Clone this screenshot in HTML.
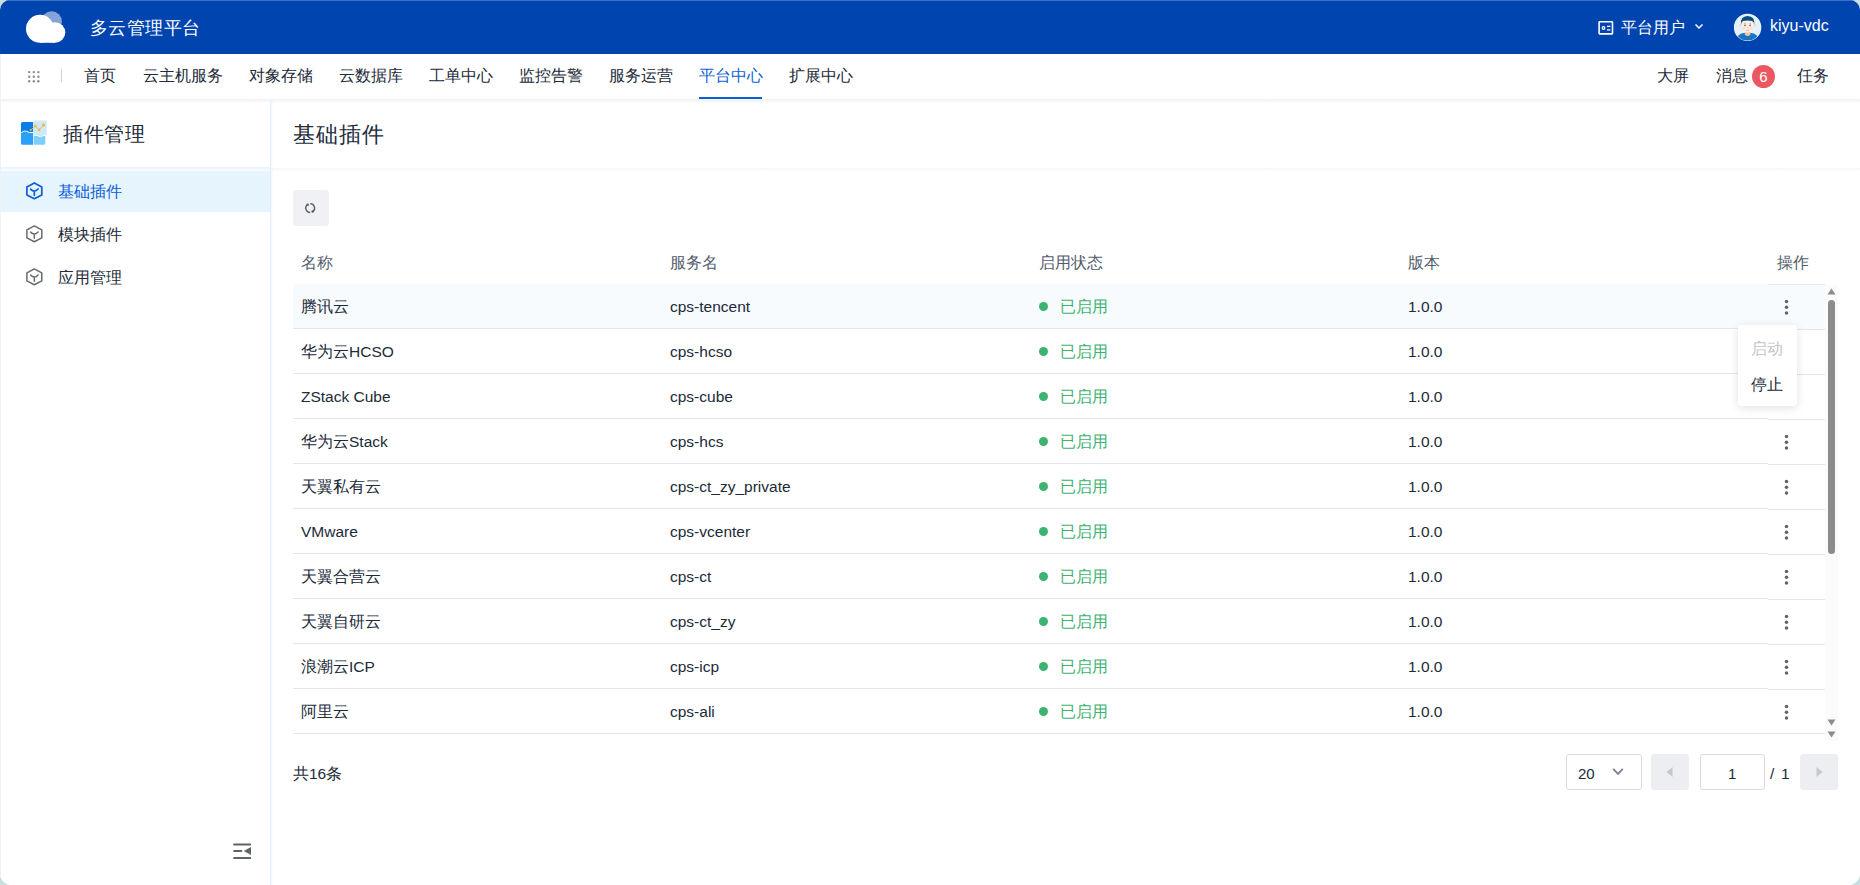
<!DOCTYPE html>
<html><head><meta charset="utf-8">
<style>
*{margin:0;padding:0;box-sizing:border-box}
html,body{width:1860px;height:885px;overflow:hidden;background:#c9dfdf;font-family:"Liberation Sans",sans-serif;}
.abs{position:absolute}
#app{position:absolute;left:0;top:0;width:1860px;height:885px;background:#fff;border-radius:10px 10px 12px 12px;overflow:hidden}
#ledge{position:absolute;left:0;top:54px;width:1px;height:831px;background:#edf2f6;z-index:5}
#hdr{position:absolute;left:0;top:0;width:1860px;height:54px;background:#0044b0;border-top:1px solid #3d6fc2}
#nav{position:absolute;left:0;top:54px;width:1860px;height:45px;background:#fff;z-index:2}
#navsh{position:absolute;left:0;top:99px;width:1860px;height:4px;background:linear-gradient(#eef0f3,rgba(255,255,255,0));z-index:3}
.t{position:absolute;white-space:nowrap;line-height:1}
.l{font-size:15.5px}
#side{position:absolute;left:0;top:99px;width:270px;height:786px;background:#fff}
#sideb{position:absolute;left:270px;top:99px;width:1px;height:786px;background:#e2eefb;z-index:2}
#sidesh{position:absolute;left:271px;top:99px;width:3px;height:786px;background:linear-gradient(90deg,#f3f7fc,rgba(255,255,255,0));z-index:2}
#main{position:absolute;left:271px;top:99px;width:1589px;height:786px;background:#fff}
.nv{font-size:16px;color:#212a38;top:14px}
.row{position:absolute;left:22px;width:1532px;height:45px;border-bottom:1px solid #e3e7ed}
.row .c{top:15px;font-size:16px;color:#212a38}
.h{font-size:16px;color:#525d6c}
.dot{top:18px;width:9px;height:9px;border-radius:50%;background:#3cb371}
</style></head><body>
<div id="app"><div id="ledge"></div>
 <div id="hdr">
  <svg class="abs" style="left:20px;top:3px" width="50" height="44" viewBox="20 4 50 44">
   <circle cx="51.6" cy="21.6" r="10.3" fill="#85a3d6"/>
   <circle cx="40" cy="28.8" r="14" fill="#fff"/>
   <circle cx="55" cy="32.5" r="10.3" fill="#fff"/>
   <rect x="40" y="33" width="15" height="9.8" fill="#fff"/>
  </svg>
  <div class="t" style="left:90px;top:18px;font-size:18px;letter-spacing:.45px;color:#fff">多云管理平台</div>
  <svg class="abs" style="left:1597px;top:18px" width="18" height="17" viewBox="0 0 18 17"><rect x="2.1" y="2.8" width="13.4" height="12.1" rx="0.6" fill="none" stroke="#fff" stroke-width="1.6"/><circle cx="6.5" cy="9" r="1.35" fill="none" stroke="#fff" stroke-width="1.2"/><path d="M10 7.4h3.3M10 10.9h3.3" stroke="#fff" stroke-width="1.3"/></svg>
  <div class="t" style="left:1621px;top:19px;font-size:16px;color:#fff">平台用户</div>
  <svg class="abs" style="left:1694px;top:22px" width="10" height="7" viewBox="0 0 10 7"><path d="M1.5 1.5L5 5l3.5-3.5" fill="none" stroke="#fff" stroke-width="1.5"/></svg>
  <svg class="abs" style="left:1733px;top:12.2px" width="29" height="29" viewBox="0 0 29 29">
   <defs><clipPath id="cc"><circle cx="14.6" cy="14.4" r="13.1"/></clipPath></defs>
   <circle cx="14.6" cy="14.4" r="13.7" fill="#f4f9fe"/>
   <circle cx="14.6" cy="14.4" r="13.1" fill="#e2f1fc"/>
   <g clip-path="url(#cc)">
   <path d="M2.5 30 Q3.5 21 10.5 20 L18.7 20 Q25.7 21 26.7 30Z" fill="#1b74c6"/>
   <path d="M11.8 18.5 h5.6 v3.2 q-2.8 2.6 -5.6 0z" fill="#efc4a2"/>
   <circle cx="7.7" cy="12.6" r="1.3" fill="#f6d9c6"/><circle cx="21.5" cy="12.6" r="1.3" fill="#f6d9c6"/>
   <ellipse cx="14.6" cy="13.6" rx="6.3" ry="6.2" fill="#fdeee6"/>
   <path d="M7.9 12 Q7 3.3 14.6 3.1 Q22.2 3.3 21.3 12 Q20.8 8.6 19.2 8 Q14.6 7.2 10 8 Q8.4 8.6 7.9 12Z" fill="#0d4a7e"/>
   <circle cx="10.8" cy="15.3" r="1.4" fill="#f7d6d0" opacity=".8"/><circle cx="18.4" cy="15.3" r="1.4" fill="#f7d6d0" opacity=".8"/>
   <path d="M11 10.3 h2 M16.2 10.3 h2" stroke="#c9b9aa" stroke-width="1"/>
   <circle cx="12" cy="12.4" r="0.8" fill="#6b5540"/><circle cx="17.1" cy="12.4" r="0.8" fill="#6b5540"/>
   <circle cx="14.6" cy="14.6" r="0.5" fill="#e8b4b0"/>
   <path d="M13.4 17.3 h2.4" stroke="#e39a9a" stroke-width="1"/>
   </g>
  </svg>
  <div class="t" style="left:1770px;top:17px;font-size:16px;color:#fff">kiyu-vdc</div>
 </div>
 <div id="nav">
  <svg class="abs" style="left:27px;top:16px" width="14" height="14" viewBox="0 0 14 14" fill="#8a8e95"><circle cx="2.2" cy="2.1" r="1.2"/><circle cx="6.8" cy="2.1" r="1.2"/><circle cx="11.4" cy="2.1" r="1.2"/><circle cx="2.2" cy="6.7" r="1.2"/><circle cx="6.8" cy="6.7" r="1.2"/><circle cx="11.4" cy="6.7" r="1.2"/><circle cx="2.2" cy="11.3" r="1.2"/><circle cx="6.8" cy="11.3" r="1.2"/><circle cx="11.4" cy="11.3" r="1.2"/></svg>
  <div class="abs" style="left:61px;top:15px;width:1px;height:13px;background:#c9d4e1"></div>
  <div class="t nv" style="left:84px">首页</div>
  <div class="t nv" style="left:143px">云主机服务</div>
  <div class="t nv" style="left:249px">对象存储</div>
  <div class="t nv" style="left:339px">云数据库</div>
  <div class="t nv" style="left:429px">工单中心</div>
  <div class="t nv" style="left:519px">监控告警</div>
  <div class="t nv" style="left:609px">服务运营</div>
  <div class="t nv" style="left:699px;color:#0d5fd6">平台中心</div>
  <div class="t nv" style="left:789px">扩展中心</div>
  <div class="abs" style="left:699px;top:43px;width:63px;height:2px;background:#0d5fd6"></div>
  <div class="t nv" style="left:1657px">大屏</div>
  <div class="t nv" style="left:1716px">消息</div>
  <div class="abs" style="left:1752px;top:11px;width:23px;height:23px;border-radius:50%;background:#eb5862;color:#fff;font-size:15px;line-height:24px;text-align:center">6</div>
  <div class="t nv" style="left:1797px">任务</div>
 </div>
 <div id="navsh"></div>
 <div id="side">
  <svg class="abs" style="left:21px;top:21px" width="27" height="26" viewBox="0 0 27 26">
   <path d="M0 3.4 Q0 1.9 1.5 1.9 H12.2 V12.8 H0Z" fill="#0a7fe8"/>
   <path d="M0 12.6 H12.2 V24.7 H1.5 Q0 24.7 0 23.2Z" fill="#2aa0f6"/>
   <path d="M12.9 0.5 H25.7 V14.9 H12.9Z" fill="#cdeafd"/>
   <path d="M12.9 15.6 H24.3 V23.2 Q24.3 24.7 22.8 24.7 H12.9Z" fill="#7dcefd"/>
   <path d="M0.2 12.9 Q3 10 5.4 11.3 Q8 12.9 12.2 12.7" fill="none" stroke="#fff" stroke-width="1"/>
   <path d="M12.9 15.3 Q16.5 15 19.5 16.9 Q22 15.2 24.8 15.3" fill="none" stroke="#fff" stroke-width="1"/>
   <path d="M9.6 10.1 L14.4 6.1 L18.1 9.8 L22.6 5" fill="none" stroke="#f8b531" stroke-width="0.9"/>
   <circle cx="14.4" cy="6.1" r="1.35" fill="#f8b531"/><circle cx="18.1" cy="9.8" r="1.35" fill="#f8b531"/><circle cx="22.6" cy="5" r="1.6" fill="#f8b531"/><circle cx="9.6" cy="10.1" r="1" fill="#f8b531"/>
  </svg>
  <div class="t" style="left:63px;top:24.5px;font-size:20px;letter-spacing:.55px;color:#212a38">插件管理</div>
  <div class="abs" style="left:0;top:68px;width:270px;height:4px;background:linear-gradient(#eaf2fb,#fbfdff)"></div>
  <div class="abs" style="left:0;top:72px;width:270px;height:41px;background:#e5f4fd"></div>
  <svg class="abs" style="left:25px;top:82px" width="19" height="20" viewBox="0 0 19 20"><path d="M9.33 1.9 L16.8 5.95 V13.95 L9.33 17.75 L1.9 13.95 V5.95Z" fill="none" stroke="#0c5dd8" stroke-width="1.7" stroke-linejoin="round"/><path d="M5.6 8.1 Q7.4 10.1 9.33 10.1 Q11.2 10.1 13.05 8.0 M9.33 10 V14.3" fill="none" stroke="#0c5dd8" stroke-width="1.7" stroke-linecap="round" stroke-linejoin="round"/></svg>
  <div class="t" style="left:58px;top:85px;font-size:16px;color:#0c5dd8">基础插件</div>
  <svg class="abs" style="left:25px;top:125px" width="19" height="20" viewBox="0 0 19 20"><path d="M9.33 1.9 L16.8 5.95 V13.95 L9.33 17.75 L1.9 13.95 V5.95Z" fill="none" stroke="#666a71" stroke-width="1.5" stroke-linejoin="round"/><path d="M5.6 8.1 Q7.4 10.1 9.33 10.1 Q11.2 10.1 13.05 8.0 M9.33 10 V14.3" fill="none" stroke="#666a71" stroke-width="1.5" stroke-linecap="round" stroke-linejoin="round"/></svg>
  <div class="t" style="left:58px;top:128px;font-size:16px;color:#212a38">模块插件</div>
  <svg class="abs" style="left:25px;top:168px" width="19" height="20" viewBox="0 0 19 20"><path d="M9.33 1.9 L16.8 5.95 V13.95 L9.33 17.75 L1.9 13.95 V5.95Z" fill="none" stroke="#666a71" stroke-width="1.5" stroke-linejoin="round"/><path d="M5.6 8.1 Q7.4 10.1 9.33 10.1 Q11.2 10.1 13.05 8.0 M9.33 10 V14.3" fill="none" stroke="#666a71" stroke-width="1.5" stroke-linecap="round" stroke-linejoin="round"/></svg>
  <div class="t" style="left:58px;top:171px;font-size:16px;color:#212a38">应用管理</div>
  <svg class="abs" style="left:232px;top:743px" width="20" height="18" viewBox="0 0 20 18"><path d="M2.1 2.6h16.1M2.1 9h7.2M2.1 16h16.1" stroke="#5f6267" stroke-width="2" stroke-linecap="round"/><path d="M19 5 L11.8 9 L19 13Z" fill="#5f6267"/></svg>
 </div>
 <div id="sideb"></div><div id="sidesh"></div>
 <div id="main">
  <div class="t" style="left:22px;top:25px;font-size:22px;letter-spacing:.9px;color:#212a38">基础插件</div>
  <div class="abs" style="left:0;top:69px;width:1589px;height:3px;background:linear-gradient(#f4f6f9,#fdfdfe)"></div>
  <div class="abs" style="left:22px;top:91px;width:36px;height:36px;background:#eff1f5;border-radius:3px"></div>
  <svg class="abs" style="left:31px;top:101px" width="16" height="16" viewBox="0 0 16 16"><path d="M8.2 3.7 A4.4 4.4 0 0 1 10.85 11.62 M8.2 12.5 A4.4 4.4 0 0 1 5.55 4.58" fill="none" stroke="#5b5f66" stroke-width="1.35"/><circle cx="10.7" cy="11.5" r="1.25" fill="#5b5f66"/><circle cx="5.7" cy="4.7" r="1.25" fill="#5b5f66"/></svg>
  <div class="t h" style="left:30px;top:156px">名称</div>
  <div class="t h" style="left:399px;top:156px">服务名</div>
  <div class="t h" style="left:768px;top:156px">启用状态</div>
  <div class="t h" style="left:1137px;top:156px">版本</div>
  <div class="t h" style="left:1506px;top:156px">操作</div>
  <div class="row" style="top:185px;background:#f7fbfe">
   <div class="t c" style="left:8px">腾讯云</div>
   <div class="t c" style="left:377px"><span class="l">cps-tencent</span></div>
   <div class="abs dot" style="left:746px"></div>
   <div class="t c" style="left:767px;color:#3cb371">已启用</div>
   <div class="t c" style="left:1115px"><span class="l">1.0.0</span></div>
  </div>
  <div class="row" style="top:230px;background:#fff">
   <div class="t c" style="left:8px">华为云<span class="l">HCSO</span></div>
   <div class="t c" style="left:377px"><span class="l">cps-hcso</span></div>
   <div class="abs dot" style="left:746px"></div>
   <div class="t c" style="left:767px;color:#3cb371">已启用</div>
   <div class="t c" style="left:1115px"><span class="l">1.0.0</span></div>
  </div>
  <div class="row" style="top:275px;background:#fff">
   <div class="t c" style="left:8px"><span class="l">ZStack Cube</span></div>
   <div class="t c" style="left:377px"><span class="l">cps-cube</span></div>
   <div class="abs dot" style="left:746px"></div>
   <div class="t c" style="left:767px;color:#3cb371">已启用</div>
   <div class="t c" style="left:1115px"><span class="l">1.0.0</span></div>
  </div>
  <div class="row" style="top:320px;background:#fff">
   <div class="t c" style="left:8px">华为云<span class="l">Stack</span></div>
   <div class="t c" style="left:377px"><span class="l">cps-hcs</span></div>
   <div class="abs dot" style="left:746px"></div>
   <div class="t c" style="left:767px;color:#3cb371">已启用</div>
   <div class="t c" style="left:1115px"><span class="l">1.0.0</span></div>
  </div>
  <div class="row" style="top:365px;background:#fff">
   <div class="t c" style="left:8px">天翼私有云</div>
   <div class="t c" style="left:377px"><span class="l">cps-ct_zy_private</span></div>
   <div class="abs dot" style="left:746px"></div>
   <div class="t c" style="left:767px;color:#3cb371">已启用</div>
   <div class="t c" style="left:1115px"><span class="l">1.0.0</span></div>
  </div>
  <div class="row" style="top:410px;background:#fff">
   <div class="t c" style="left:8px"><span class="l">VMware</span></div>
   <div class="t c" style="left:377px"><span class="l">cps-vcenter</span></div>
   <div class="abs dot" style="left:746px"></div>
   <div class="t c" style="left:767px;color:#3cb371">已启用</div>
   <div class="t c" style="left:1115px"><span class="l">1.0.0</span></div>
  </div>
  <div class="row" style="top:455px;background:#fff">
   <div class="t c" style="left:8px">天翼合营云</div>
   <div class="t c" style="left:377px"><span class="l">cps-ct</span></div>
   <div class="abs dot" style="left:746px"></div>
   <div class="t c" style="left:767px;color:#3cb371">已启用</div>
   <div class="t c" style="left:1115px"><span class="l">1.0.0</span></div>
  </div>
  <div class="row" style="top:500px;background:#fff">
   <div class="t c" style="left:8px">天翼自研云</div>
   <div class="t c" style="left:377px"><span class="l">cps-ct_zy</span></div>
   <div class="abs dot" style="left:746px"></div>
   <div class="t c" style="left:767px;color:#3cb371">已启用</div>
   <div class="t c" style="left:1115px"><span class="l">1.0.0</span></div>
  </div>
  <div class="row" style="top:545px;background:#fff">
   <div class="t c" style="left:8px">浪潮云<span class="l">ICP</span></div>
   <div class="t c" style="left:377px"><span class="l">cps-icp</span></div>
   <div class="abs dot" style="left:746px"></div>
   <div class="t c" style="left:767px;color:#3cb371">已启用</div>
   <div class="t c" style="left:1115px"><span class="l">1.0.0</span></div>
  </div>
  <div class="row" style="top:590px;background:#fff">
   <div class="t c" style="left:8px">阿里云</div>
   <div class="t c" style="left:377px"><span class="l">cps-ali</span></div>
   <div class="abs dot" style="left:746px"></div>
   <div class="t c" style="left:767px;color:#3cb371">已启用</div>
   <div class="t c" style="left:1115px"><span class="l">1.0.0</span></div>
  </div>

  <div class="t" style="left:22px;top:667px;font-size:16px;color:#212a38">共<span class="l">16</span>条</div>
  <div class="abs" style="left:1497px;top:185px;width:57px;height:1px;background:#e3e7ed"></div>
  <div class="abs" style="left:1497px;top:186px;width:57px;height:45px;background:#f7fbfe;border-bottom:1px solid #e3e7ed"></div><svg class="abs" style="left:1513px;top:200px" width="6" height="16" viewBox="0 0 6 16" fill="#5f646b"><circle cx="2.5" cy="2.6" r="1.75"/><circle cx="2.5" cy="8.3" r="1.75"/><circle cx="2.5" cy="14" r="1.75"/></svg><div class="abs" style="left:1497px;top:231px;width:57px;height:45px;background:#fff;border-bottom:1px solid #e3e7ed"></div><svg class="abs" style="left:1513px;top:245px" width="6" height="16" viewBox="0 0 6 16" fill="#5f646b"><circle cx="2.5" cy="2.6" r="1.75"/><circle cx="2.5" cy="8.3" r="1.75"/><circle cx="2.5" cy="14" r="1.75"/></svg><div class="abs" style="left:1497px;top:276px;width:57px;height:45px;background:#fff;border-bottom:1px solid #e3e7ed"></div><svg class="abs" style="left:1513px;top:290px" width="6" height="16" viewBox="0 0 6 16" fill="#5f646b"><circle cx="2.5" cy="2.6" r="1.75"/><circle cx="2.5" cy="8.3" r="1.75"/><circle cx="2.5" cy="14" r="1.75"/></svg><div class="abs" style="left:1497px;top:321px;width:57px;height:45px;background:#fff;border-bottom:1px solid #e3e7ed"></div><svg class="abs" style="left:1513px;top:335px" width="6" height="16" viewBox="0 0 6 16" fill="#5f646b"><circle cx="2.5" cy="2.6" r="1.75"/><circle cx="2.5" cy="8.3" r="1.75"/><circle cx="2.5" cy="14" r="1.75"/></svg><div class="abs" style="left:1497px;top:366px;width:57px;height:45px;background:#fff;border-bottom:1px solid #e3e7ed"></div><svg class="abs" style="left:1513px;top:380px" width="6" height="16" viewBox="0 0 6 16" fill="#5f646b"><circle cx="2.5" cy="2.6" r="1.75"/><circle cx="2.5" cy="8.3" r="1.75"/><circle cx="2.5" cy="14" r="1.75"/></svg><div class="abs" style="left:1497px;top:411px;width:57px;height:45px;background:#fff;border-bottom:1px solid #e3e7ed"></div><svg class="abs" style="left:1513px;top:425px" width="6" height="16" viewBox="0 0 6 16" fill="#5f646b"><circle cx="2.5" cy="2.6" r="1.75"/><circle cx="2.5" cy="8.3" r="1.75"/><circle cx="2.5" cy="14" r="1.75"/></svg><div class="abs" style="left:1497px;top:456px;width:57px;height:45px;background:#fff;border-bottom:1px solid #e3e7ed"></div><svg class="abs" style="left:1513px;top:470px" width="6" height="16" viewBox="0 0 6 16" fill="#5f646b"><circle cx="2.5" cy="2.6" r="1.75"/><circle cx="2.5" cy="8.3" r="1.75"/><circle cx="2.5" cy="14" r="1.75"/></svg><div class="abs" style="left:1497px;top:501px;width:57px;height:45px;background:#fff;border-bottom:1px solid #e3e7ed"></div><svg class="abs" style="left:1513px;top:515px" width="6" height="16" viewBox="0 0 6 16" fill="#5f646b"><circle cx="2.5" cy="2.6" r="1.75"/><circle cx="2.5" cy="8.3" r="1.75"/><circle cx="2.5" cy="14" r="1.75"/></svg><div class="abs" style="left:1497px;top:546px;width:57px;height:45px;background:#fff;border-bottom:1px solid #e3e7ed"></div><svg class="abs" style="left:1513px;top:560px" width="6" height="16" viewBox="0 0 6 16" fill="#5f646b"><circle cx="2.5" cy="2.6" r="1.75"/><circle cx="2.5" cy="8.3" r="1.75"/><circle cx="2.5" cy="14" r="1.75"/></svg><div class="abs" style="left:1497px;top:591px;width:57px;height:44px;background:#fff;border-bottom:1px solid #e3e7ed"></div><svg class="abs" style="left:1513px;top:605px" width="6" height="16" viewBox="0 0 6 16" fill="#5f646b"><circle cx="2.5" cy="2.6" r="1.75"/><circle cx="2.5" cy="8.3" r="1.75"/><circle cx="2.5" cy="14" r="1.75"/></svg>
  <div class="abs" style="left:1554px;top:186px;width:13px;height:456px;background:#fbfbfb"></div>
  <svg class="abs" style="left:1556px;top:189px" width="9" height="7" viewBox="0 0 9 7"><path d="M4.5 0.5 L8.5 6.5 H0.5Z" fill="#8c8c8c"/></svg>
  <div class="abs" style="left:1557px;top:201px;width:7px;height:254px;background:#8c8c8c;border-radius:4px"></div>
  <svg class="abs" style="left:1556px;top:620px" width="9" height="7" viewBox="0 0 9 7"><path d="M0.5 0.5 H8.5 L4.5 6.5Z" fill="#8c8c8c"/></svg>
  <svg class="abs" style="left:1556px;top:632px" width="9" height="7" viewBox="0 0 9 7"><path d="M0.5 0.5 H8.5 L4.5 6.5Z" fill="#8c8c8c"/></svg>
  <div class="abs" style="left:1467px;top:226px;width:59px;height:81px;background:#fff;border-radius:4px;box-shadow:0 2px 10px rgba(0,0,0,.12)"></div>
  <div class="t" style="left:1480px;top:241.5px;font-size:16px;color:#c5c6c8">启动</div>
  <div class="t" style="left:1480px;top:278px;font-size:16px;color:#212a38">停止</div>
  <div class="abs" style="left:1295px;top:655px;width:76px;height:36px;border:1px solid #d6dbe2;border-radius:3px"></div>
  <div class="t" style="left:1307px;top:667px;font-size:15px;color:#212a38">20</div>
  <svg class="abs" style="left:1341px;top:668px" width="12" height="9" viewBox="0 0 12 9"><path d="M1.2 1.8 L6 6.8 L10.8 1.8" fill="none" stroke="#7b8594" stroke-width="1.9"/></svg>
  <div class="abs" style="left:1380px;top:655px;width:38px;height:36px;background:#eceef1;border-radius:3px"></div>
  <svg class="abs" style="left:1395px;top:668px" width="7" height="10" viewBox="0 0 7 10"><path d="M6.5 0 V10 L0.5 5Z" fill="#c3c9d2"/></svg>
  <div class="abs" style="left:1429px;top:655px;width:65px;height:36px;border:1px solid #d6dbe2;border-radius:3px"></div>
  <div class="t" style="left:1457px;top:667px;font-size:15px;color:#212a38">1</div>
  <div class="t" style="left:1499px;top:667px;font-size:15.5px;color:#212a38">/</div><div class="t" style="left:1510px;top:667px;font-size:15.5px;color:#212a38">1</div>
  <div class="abs" style="left:1529px;top:655px;width:38px;height:36px;background:#eceef1;border-radius:3px"></div>
  <svg class="abs" style="left:1545px;top:668px" width="7" height="10" viewBox="0 0 7 10"><path d="M0.5 0 V10 L6.5 5Z" fill="#c3c9d2"/></svg>
 </div>
</div>
</body></html>
